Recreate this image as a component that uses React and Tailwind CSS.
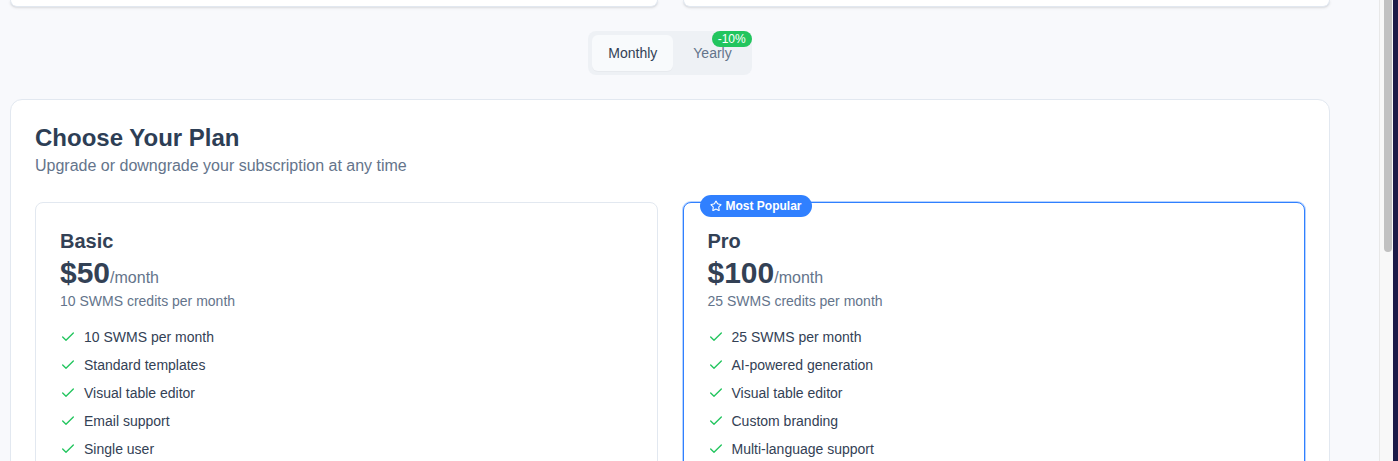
import { Check, Star } from "lucide-react";

const plans = [
  {
    name: "Basic",
    price: "$50",
    credits: "10 SWMS credits per month",
    features: [
      "10 SWMS per month",
      "Standard templates",
      "Visual table editor",
      "Email support",
      "Single user",
    ],
  },
  {
    name: "Pro",
    price: "$100",
    credits: "25 SWMS credits per month",
    popular: true,
    features: [
      "25 SWMS per month",
      "AI-powered generation",
      "Visual table editor",
      "Custom branding",
      "Multi-language support",
    ],
  },
];

function PlanCard({ plan }) {
  return (
    <div
      className={`relative rounded-lg bg-white p-6 ${
        plan.popular
          ? "border border-[#3080ff] shadow-[0_0_0_1px_rgba(48,128,255,0.35)]"
          : "border border-[#e2e8f0]"
      }`}
    >
      {plan.popular && (
        <div className="absolute -top-[8px] left-4 flex items-center gap-1 rounded-full bg-[#3080ff] px-2.5 text-xs font-bold leading-[22px] text-white">
          <Star size={12} strokeWidth={2.2} />
          Most Popular
        </div>
      )}
      <h3 className="text-xl font-bold leading-7 text-[#334155]">{plan.name}</h3>
      <div className="flex items-baseline">
        <span className="text-3xl font-bold leading-9 text-[#334155]">{plan.price}</span>
        <span className="text-base text-[#64748b]">/month</span>
      </div>
      <p className="text-sm leading-5 text-[#64748b]">{plan.credits}</p>
      <ul className="mt-4 flex flex-col gap-2">
        {plan.features.map((f) => (
          <li key={f} className="flex items-center gap-2 text-sm leading-5 text-[#334155]">
            <Check size={16} className="text-[#22c55e]" strokeWidth={2} />
            {f}
          </li>
        ))}
      </ul>
    </div>
  );
}

export default function App() {
  return (
    <div
      className="flex h-[461px] w-[1398px] overflow-hidden bg-[#f8f9fc]"
      style={{ fontFamily: '"Liberation Sans", Arial, sans-serif' }}
    >
      <main className="w-[1379px] shrink-0 pl-[10px]">
        <div className="w-[1320px]">
          <div className="grid grid-cols-2 gap-[25px]">
            <div className="h-[7px] rounded-b-xl border-x border-b border-[#e2e8f0] bg-white shadow-sm" />
            <div className="h-[7px] rounded-b-xl border-x border-b border-[#e2e8f0] bg-white shadow-sm" />
          </div>

          <div className="mt-[24px] flex justify-center">
            <div className="relative flex gap-1 rounded-lg bg-[#eef1f5] p-1">
              <button className="rounded-md bg-[#f8fafc] px-4 py-2 text-sm leading-5 text-[#334155] shadow-[0_1px_1px_rgba(0,0,0,0.03)]">
                Monthly
              </button>
              <button className="rounded-md px-4 py-2 text-sm leading-5 text-[#64748b]">
                Yearly
              </button>
              <span className="absolute right-0 top-0 rounded-full bg-[#22c55e] px-1.5 text-xs leading-4 text-white">
                -10%
              </span>
            </div>
          </div>

          <section className="mt-[24px] rounded-xl border border-[#e2e8f0] bg-white p-6">
            <h2 className="text-2xl font-bold leading-7 text-[#2d3e55]">Choose Your Plan</h2>
            <p className="mt-[2px] text-base leading-6 text-[#64748b]">
              Upgrade or downgrade your subscription at any time
            </p>
            <div className="mt-6 grid grid-cols-2 gap-[25px]">
              {plans.map((p) => (
                <PlanCard key={p.name} plan={p} />
              ))}
            </div>
          </section>
        </div>
      </main>

      <div className="flex w-[14px] shrink-0 justify-center border-l border-[#e8e8e8] bg-[#f8f8f8] pl-[2px]">
        <div className="h-[252px] w-[8px] rounded-b-full bg-[#c1c1c1]" />
      </div>
      <div className="w-[5px] shrink-0 bg-[#1c1a48]" />
    </div>
  );
}
